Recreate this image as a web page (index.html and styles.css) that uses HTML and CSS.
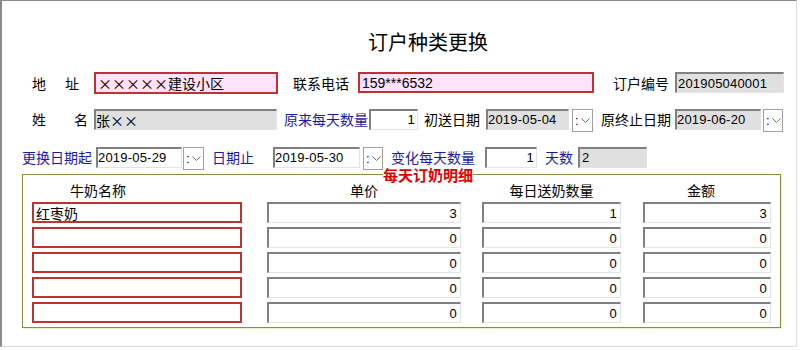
FILE: index.html
```html
<html>

<head>
    <meta charset="utf-8">
    <link rel="stylesheet" href="styles.css">
</head>

<body>
    <div class="window">
        <div class="title">订户种类更换</div>

        <div class="row row-1">
            <span class="label pair pair-1"><span>地</span><span>址</span></span>
            <input class="field red pink cjk w-addr" value="×××××建设小区">
            <span class="label m-phone">联系电话</span>
            <input class="field red pink num14 w-phone" value="159***6532">
            <span class="label m-order">订户编号</span>
            <input class="field sunken gray num w-order" value="201905040001">
        </div>

        <div class="row row-2">
            <span class="label pair pair-2"><span>姓</span><span>名</span></span>
            <input class="field sunken gray cjk w-name" value="张××">
            <span class="label blue m-oldqty">原来每天数量</span>
            <input class="field sunken num right w-oldqty" value="1">
            <span class="label m-start">初送日期</span>
            <input class="field sunken gray num w-start" value="2019-05-04">
            <button class="drop m-drop1">:<svg width="9" height="5"><polyline points="0.5,0.5 4.5,4.5 8.5,0.5" /></svg></button>
            <span class="label m-oldend">原终止日期</span>
            <input class="field sunken gray num w-oldend" value="2019-06-20">
            <button class="drop m-drop2">:<svg width="9" height="5"><polyline points="0.5,0.5 4.5,4.5 8.5,0.5" /></svg></button>
        </div>

        <div class="row row-3">
            <span class="label blue m-from">更换日期起</span>
            <input class="field sunken num w-from" value="2019-05-29">
            <button class="drop m-drop3">:<svg width="9" height="5"><polyline points="0.5,0.5 4.5,4.5 8.5,0.5" /></svg></button>
            <span class="label blue m-to">日期止</span>
            <input class="field sunken num w-to" value="2019-05-30">
            <button class="drop m-drop4">:<svg width="9" height="5"><polyline points="0.5,0.5 4.5,4.5 8.5,0.5" /></svg></button>
            <span class="label blue m-newqty">变化每天数量</span>
            <input class="field sunken num right w-newqty" value="1">
            <span class="label blue m-days">天数</span>
            <input class="field sunken gray num w-days" value="2">
        </div>

        <fieldset class="group">
            <legend>每天订奶明细</legend>
            <div class="cols">
                <div class="col col-name">
                    <div class="head">牛奶名称</div>
                    <input class="field red cjk" value="红枣奶">
                    <input class="field red cjk" value="">
                    <input class="field red cjk" value="">
                    <input class="field red cjk" value="">
                    <input class="field red cjk" value="">
                </div>
                <div class="col col-price">
                    <div class="head">单价</div>
                    <input class="field sunken num right" value="3">
                    <input class="field sunken num right" value="0">
                    <input class="field sunken num right" value="0">
                    <input class="field sunken num right" value="0">
                    <input class="field sunken num right" value="0">
                </div>
                <div class="col col-qty">
                    <div class="head">每日送奶数量</div>
                    <input class="field sunken num right" value="1">
                    <input class="field sunken num right" value="0">
                    <input class="field sunken num right" value="0">
                    <input class="field sunken num right" value="0">
                    <input class="field sunken num right" value="0">
                </div>
                <div class="col col-amount">
                    <div class="head">金额</div>
                    <input class="field sunken num right" value="3">
                    <input class="field sunken num right" value="0">
                    <input class="field sunken num right" value="0">
                    <input class="field sunken num right" value="0">
                    <input class="field sunken num right" value="0">
                </div>
            </div>
        </fieldset>
    </div>
</body>

</html>
```

FILE: styles.css
```css
body {
    margin: 0;
    background: #fff;
    font-family: "Noto Sans CJK SC", sans-serif;
    font-size: 14px;
    color: #000;
}

.window {
    width: 794px;
    height: 345px;
    border-top: 1px solid #8a8a8a;
    border-left: 2px solid #8a8a8a;
    border-right: 1px solid #dcdcdc;
    border-bottom: 1px solid #dcdcdc;
}

.title {
    padding: 29px 0 0 366px;
    font-size: 20px;
    line-height: 24px;
}

.row {
    display: flex;
    align-items: center;
    height: 22px;
}

.row-1 {
    margin-top: 17px;
    height: 23px;
}

.row-2 {
    margin-top: 14px;
}

.row-3 {
    margin-top: 16px;
}

.label {
    line-height: 16px;
    white-space: nowrap;
}

.blue {
    color: #1a1aa6;
}

.pair {
    display: flex;
    justify-content: space-between;
    margin-left: 30px;
}

.pair-1 {
    width: 47px;
}

.pair-2 {
    width: 56px;
}

/* inputs */

.field {
    box-sizing: border-box;
    height: 21px;
    margin: 0;
    padding: 0 2px;
    background: #fff;
    color: #000;
    outline: none;
}

.num {
    font-family: "Liberation Sans", sans-serif;
    font-size: 13px;
    letter-spacing: 0.2px;
}

.num14 {
    font-family: "Liberation Sans", sans-serif;
    font-size: 14px;
}

.cjk {
    font-family: "Noto Sans CJK SC", sans-serif;
    font-size: 14px;
    font-variant-east-asian: full-width;
}

.right {
    text-align: right;
}

.sunken {
    border-top: 2px solid #808080;
    border-left: 2px solid #808080;
    border-right: 1px solid #e3e3e3;
    border-bottom: 1px solid #e3e3e3;
}

.gray {
    background: #e0e0e0;
}

.red {
    border: 2px solid #c03232;
}

.pink {
    background: #fde2fc;
}

.drop {
    box-sizing: border-box;
    display: flex;
    align-items: center;
    gap: 2px;
    width: 21px;
    height: 23px;
    margin-top: 2px;
    padding: 0 0 0 2px;
    border: 1px solid #a0a0a0;
    background: #fff;
    font-family: "Liberation Sans", sans-serif;
    font-size: 13px;
    color: #000;
}

.drop svg polyline {
    fill: none;
    stroke: #707070;
    stroke-width: 1;
}

/* row 1 */
.w-addr { margin-left: 15px; width: 184px; height: 22px; }
.m-phone { margin-left: 15px; }
.w-phone { margin-left: 9px; width: 236px; }
.m-order { margin-left: 19px; }
.w-order { margin-left: 6px; width: 109px; padding-left: 1px; }

/* row 2 */
.w-name { margin-left: 6px; width: 183px; padding-left: 0; }
.m-oldqty { margin-left: 7px; }
.w-oldqty { margin-left: 1px; width: 49px; }
.m-start { margin-left: 6px; }
.w-start { margin-left: 6px; width: 83px; padding-left: 0; }
.m-drop1 { margin-left: 3px; }
.m-oldend { margin-left: 8px; }
.w-oldend { margin-left: 4px; width: 86px; padding-left: 0; }
.m-drop2 { margin-left: 2px; width: 20px; }

/* row 3 */
.m-from { margin-left: 20px; }
.w-from { margin-left: 4px; width: 86px; padding-left: 0; }
.m-drop3 { margin-left: 1px; }
.m-to { margin-left: 8px; }
.w-to { margin-left: 19px; width: 87px; padding-left: 0; }
.m-drop4 { margin-left: 3px; width: 20px; }
.m-newqty { margin-left: 8px; }
.w-newqty { margin-left: 10px; width: 52px; }
.m-days { margin-left: 8px; }
.w-days { margin-left: 5px; width: 69px; }

/* group box */

.group {
    box-sizing: border-box;
    width: 759px;
    min-inline-size: 0;
    margin: -2px 0 0 20px;
    padding: 0 0 4px 0;
    border: 1px solid #8b8b3d;
    box-shadow: 1px 1px 0 #f0f0c8;
}

.group legend {
    margin-left: 360px;
    padding: 0;
    color: #e00000;
    font-weight: bold;
    font-size: 15px;
    line-height: 17px;
}

.cols {
    display: flex;
}

.col {
    display: flex;
    flex-direction: column;
    gap: 4px;
}

.head {
    height: 15px;
    line-height: 15px;
    text-align: center;
}

.col-name { margin-left: 9px; width: 210px; }
.col-name .head { text-align: left; padding-left: 38px; }
.col-price { margin-left: 25px; width: 194px; }
.col-qty { margin-left: 21px; width: 139px; }
.col-amount { margin-left: 22px; width: 128px; }
.col-amount .head { text-align: left; padding-left: 44px; }

.col .right {
    padding-right: 3px;
}
```
